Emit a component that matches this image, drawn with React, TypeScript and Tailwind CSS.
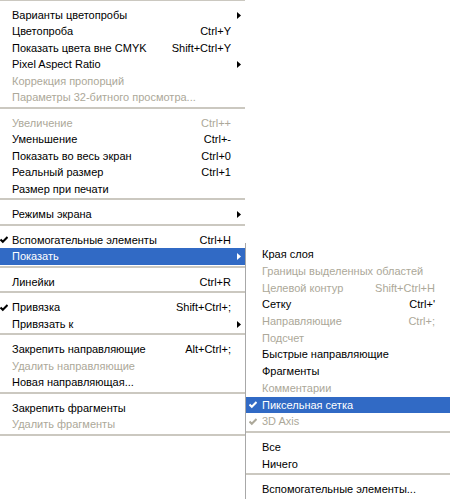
type Entry =
  | {
      label: string;
      shortcut?: string;
      disabled?: boolean;
      checked?: boolean;
      submenu?: boolean;
      active?: boolean;
    }
  | "sep";

const mainItems: Entry[] = [
  { label: "Варианты цветопробы", submenu: true },
  { label: "Цветопроба", shortcut: "Ctrl+Y" },
  { label: "Показать цвета вне CMYK", shortcut: "Shift+Ctrl+Y" },
  { label: "Pixel Aspect Ratio", submenu: true },
  { label: "Коррекция пропорций", disabled: true },
  { label: "Параметры 32-битного просмотра...", disabled: true },
  "sep",
  { label: "Увеличение", shortcut: "Ctrl++", disabled: true },
  { label: "Уменьшение", shortcut: "Ctrl+-" },
  { label: "Показать во весь экран", shortcut: "Ctrl+0" },
  { label: "Реальный размер", shortcut: "Ctrl+1" },
  { label: "Размер при печати" },
  "sep",
  { label: "Режимы экрана", submenu: true },
  "sep",
  { label: "Вспомогательные элементы", shortcut: "Ctrl+H", checked: true },
  { label: "Показать", submenu: true, active: true },
  "sep",
  { label: "Линейки", shortcut: "Ctrl+R" },
  "sep",
  { label: "Привязка", shortcut: "Shift+Ctrl+;", checked: true },
  { label: "Привязать к", submenu: true },
  "sep",
  { label: "Закрепить направляющие", shortcut: "Alt+Ctrl+;" },
  { label: "Удалить направляющие", disabled: true },
  { label: "Новая направляющая..." },
  "sep",
  { label: "Закрепить фрагменты" },
  { label: "Удалить фрагменты", disabled: true },
  "sep",
];

const subItems: Entry[] = [
  { label: "Края слоя" },
  { label: "Границы выделенных областей", disabled: true },
  { label: "Целевой контур", shortcut: "Shift+Ctrl+H", disabled: true },
  { label: "Сетку", shortcut: "Ctrl+'" },
  { label: "Направляющие", shortcut: "Ctrl+;", disabled: true },
  { label: "Подсчет", disabled: true },
  { label: "Быстрые направляющие" },
  { label: "Фрагменты" },
  { label: "Комментарии", disabled: true },
  { label: "Пиксельная сетка", checked: true, active: true },
  { label: "3D Axis", checked: true, disabled: true },
  "sep",
  { label: "Все" },
  { label: "Ничего" },
  "sep",
  { label: "Вспомогательные элементы..." },
];

function Check({ color }: { color: string }) {
  return (
    <svg width="8" height="8" viewBox="0 0 8 8">
      <polyline points="0.5,3.5 2.8,5.8 7.5,1" fill="none" stroke={color} strokeWidth="2" />
    </svg>
  );
}

function Arrow({ color }: { color: string }) {
  return (
    <svg width="4" height="7" viewBox="0 0 4 7">
      <polygon points="0,0 4,3.5 0,7" fill={color} />
    </svg>
  );
}

function Separator() {
  return (
    <div className="h-[9px] pt-[1px]">
      <div className="h-[2px] bg-[#cbc8c0]" />
    </div>
  );
}

function MainRow({ item }: { item: Exclude<Entry, "sep"> }) {
  const text = item.active ? "text-white" : item.disabled ? "text-[#aca899]" : "text-black";
  const icon = item.active ? "#ffffff" : item.disabled ? "#aca899" : "#000000";
  return (
    <div className={`flex h-[16.5px] items-center ${item.active ? "bg-[#316ac5]" : ""} ${text}`}>
      <div className="flex w-[12px] items-center">{item.checked && <Check color={icon} />}</div>
      <span className="flex-1 whitespace-nowrap">{item.label}</span>
      {item.shortcut && <span className="whitespace-nowrap">{item.shortcut}</span>}
      <div className="flex w-[14px] items-center justify-end pr-[4px]">
        {item.submenu && <Arrow color={icon} />}
      </div>
    </div>
  );
}

function SubRow({ item }: { item: Exclude<Entry, "sep"> }) {
  const text = item.active ? "text-white" : item.disabled ? "text-[#aca899]" : "text-black";
  const icon = item.active ? "#ffffff" : item.disabled ? "#aca899" : "#000000";
  return (
    <div className={`flex h-[16.7px] items-center ${item.active ? "bg-[#316ac5]" : ""} ${text}`}>
      <div className="flex w-[16px] items-center pl-[3px]">{item.checked && <Check color={icon} />}</div>
      <span className="flex-1 whitespace-nowrap">{item.label}</span>
      {item.shortcut && <span className="whitespace-nowrap pr-[16px]">{item.shortcut}</span>}
    </div>
  );
}

export default function App() {
  return (
    <div
      className="relative h-[499px] w-[450px] overflow-hidden bg-white text-[11px] leading-none"
      style={{ fontFamily: '"Liberation Sans", Arial, sans-serif' }}
    >
      <div className="w-[245px]">
        <div className="h-[6.75px]">
          <div className="h-[1px] bg-[#cbc8c0]" />
        </div>
        {mainItems.map((item, i) =>
          item === "sep" ? <Separator key={i} /> : <MainRow key={i} item={item} />
        )}
      </div>

      {/* submenu for Показать */}
      <div className="absolute left-[245px] top-[243px] h-[300px] w-[206px] border-l border-[#a8a8a8] bg-white pt-[3.5px]">
        {subItems.map((item, i) =>
          item === "sep" ? <Separator key={i} /> : <SubRow key={i} item={item} />
        )}
      </div>
    </div>
  );
}
